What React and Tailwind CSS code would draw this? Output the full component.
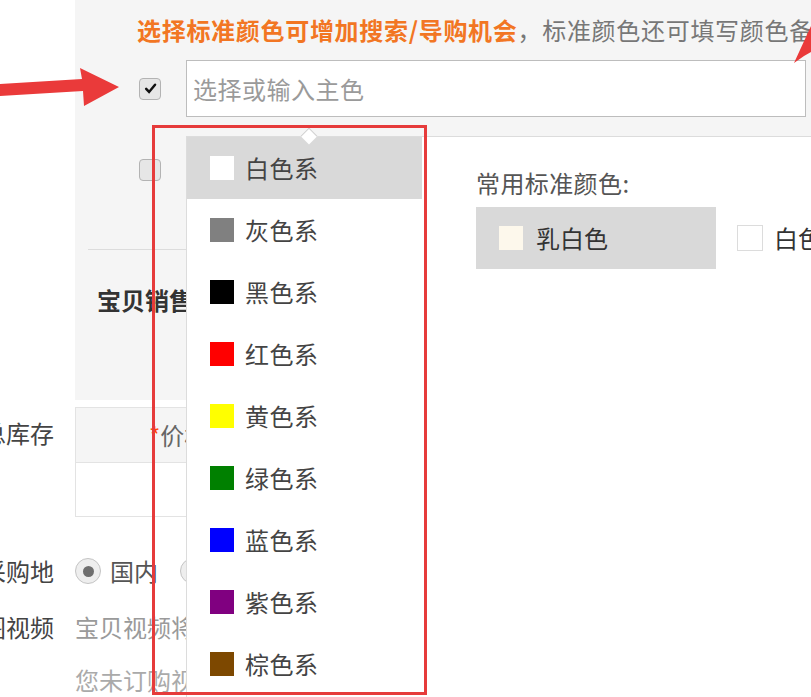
import React from 'react';

const colorGroups = [
  { name: '白色系', color: '#ffffff', active: true },
  { name: '灰色系', color: '#808080' },
  { name: '黑色系', color: '#000000' },
  { name: '红色系', color: '#ff0000' },
  { name: '黄色系', color: '#ffff00' },
  { name: '绿色系', color: '#008000' },
  { name: '蓝色系', color: '#0000ff' },
  { name: '紫色系', color: '#800080' },
  { name: '棕色系', color: '#7d4800' },
];

function Checkbox({ checked }) {
  return (
    <div className="w-[22px] h-[22px] shrink-0 rounded-[4px] border border-[#b3b3b3] bg-[#e6e6e6] flex items-center justify-center">
      {checked && (
        <svg viewBox="0 0 12 12" className="w-[13px] h-[13px]">
          <path d="M2 6.4 L4.7 9.2 L10.2 2.6" fill="none" stroke="#111" strokeWidth="2.3" strokeLinecap="round" />
        </svg>
      )}
    </div>
  );
}

function Radio({ checked }) {
  return (
    <div className="w-[26px] h-[26px] shrink-0 rounded-full border border-[#c4c4c4] bg-[#eeeeee] flex items-center justify-center">
      {checked && <div className="w-[11px] h-[11px] rounded-full bg-[#6f6f6f]" />}
    </div>
  );
}

function Label({ children }) {
  return (
    <div className="w-[54px] mr-[21px] shrink-0 flex justify-end overflow-hidden">
      <span className="shrink-0 whitespace-nowrap text-[#444]">{children}</span>
    </div>
  );
}

export default function App() {
  return (
    <div className="relative w-[811px] h-[697px] overflow-hidden bg-white font-['Noto_Sans_CJK_SC','Liberation_Sans',sans-serif] text-[24px] leading-[36px] text-[#333]">
      {/* 颜色分类 */}
      <div className="flex">
        <div className="w-[75px] shrink-0" />
        <div className="w-[736px] shrink-0 h-[400px] bg-[#f5f5f5] pt-[12px]">
          <div className="pl-[62px]">
            <p className="whitespace-nowrap text-[#777] tracking-[0.7px]">
              <span className="font-bold text-[#f27623]">选择标准颜色可增加搜索/导购机会</span>，标准颜色还可填写颜色备注信息（偏深、偏亮等）！
            </p>
            <div className="mt-[12px] h-[57px] flex items-center">
              <div className="ml-[2px]"><Checkbox checked /></div>
              <div className="ml-[25px] w-[620px] h-[57px] shrink-0 border border-[#bdbdbd] bg-white px-[6px] flex items-center text-[#9a9a9a] tracking-[0.5px]">
                选择或输入主色
              </div>
            </div>
            <div className="mt-[24px] h-[57px] flex items-center">
              <div className="ml-[2px]"><Checkbox /></div>
            </div>
          </div>
          <div className="ml-[13px] mt-[51px] border-t border-[#dcdcdc]" />
          <div className="pl-[22px] pt-[32px] font-bold text-[#333]">宝贝销售规格</div>
        </div>
      </div>

      {/* 价格库存 */}
      <div className="flex mt-[7px]">
        <div className="pt-[8px]"><Label>一口价及总库存</Label></div>
        <div className="w-[736px] shrink-0 border border-[#e3e3e3]">
          <div className="h-[55px] bg-[#f5f5f5] border-b border-[#e3e3e3] flex items-center pl-[73px] text-[#666]">
            <span className="text-[#f40]">*</span>价格
          </div>
          <div className="h-[53px] bg-white" />
        </div>
      </div>

      {/* 采购地 */}
      <div className="flex items-center h-[36px] mt-[36px]">
        <Label>宝贝采购地</Label>
        <Radio checked />
        <span className="ml-[9px] text-[#555]">国内</span>
        <div className="ml-[22px]"><Radio /></div>
        <span className="ml-[9px] text-[#555]">海外及港澳台</span>
      </div>

      {/* 主图视频 */}
      <div className="flex items-center h-[36px] mt-[20px]">
        <Label>主图视频</Label>
        <span className="whitespace-nowrap text-[#9a9a9a]">宝贝视频将在宝贝详情页展示</span>
      </div>
      <div className="flex items-center h-[36px] mt-[17px]">
        <Label />
        <span className="whitespace-nowrap text-[#aaa]">您未订购视频服务</span>
      </div>

      {/* 颜色下拉 */}
      <div className="absolute left-[186px] top-[136px] -right-[20px] bottom-0 flex bg-white border-l border-t border-[#dcdcdc]">
        <div className="absolute -top-[7px] left-[116px] w-[12px] h-[12px] rotate-45 bg-white border-l border-t border-[#d0d0d0]" />
        <div className="w-[235px] shrink-0">
          {colorGroups.map((g) => (
            <div
              key={g.name}
              className={`h-[62px] flex items-center pl-[23px] ${g.active ? 'bg-[#d9d9d9]' : ''}`}
            >
              <div className="w-[24px] h-[24px] shrink-0" style={{ backgroundColor: g.color }} />
              <span className="ml-[11px] text-[#444] tracking-[0.5px]">{g.name}</span>
            </div>
          ))}
        </div>
        <div className="flex-1 pl-[54px] pt-[28px]">
          <p className="text-[#555] tracking-[0.4px]">常用标准颜色:</p>
          <div className="mt-[6px] flex items-center">
            <div className="w-[240px] h-[62px] shrink-0 bg-[#d9d9d9] flex items-center pl-[23px]">
              <div className="w-[24px] h-[24px] bg-[#fdf8ec]" />
              <span className="ml-[13px] text-[#333]">乳白色</span>
            </div>
            <div className="ml-[21px] flex items-center shrink-0">
              <div className="w-[26px] h-[26px] bg-white border border-[#dcdcdc]" />
              <span className="ml-[11px] text-[#333]">白色</span>
            </div>
          </div>
        </div>
      </div>

      {/* 标注 */}
      <div className="absolute left-[152px] top-[125px] w-[275px] h-[570px] border-[3px] border-[#e63b3b]" />
      <svg className="absolute left-0 top-0 w-[811px] h-[697px] pointer-events-none" viewBox="0 0 811 697">
        <polygon points="0,84 82,79 80,68 119,87 84,106 83,91 0,96" fill="#ea3a3a" />
        <polygon points="794,63 811,26 811,52 804,56" fill="#ea3a3a" />
      </svg>
    </div>
  );
}
